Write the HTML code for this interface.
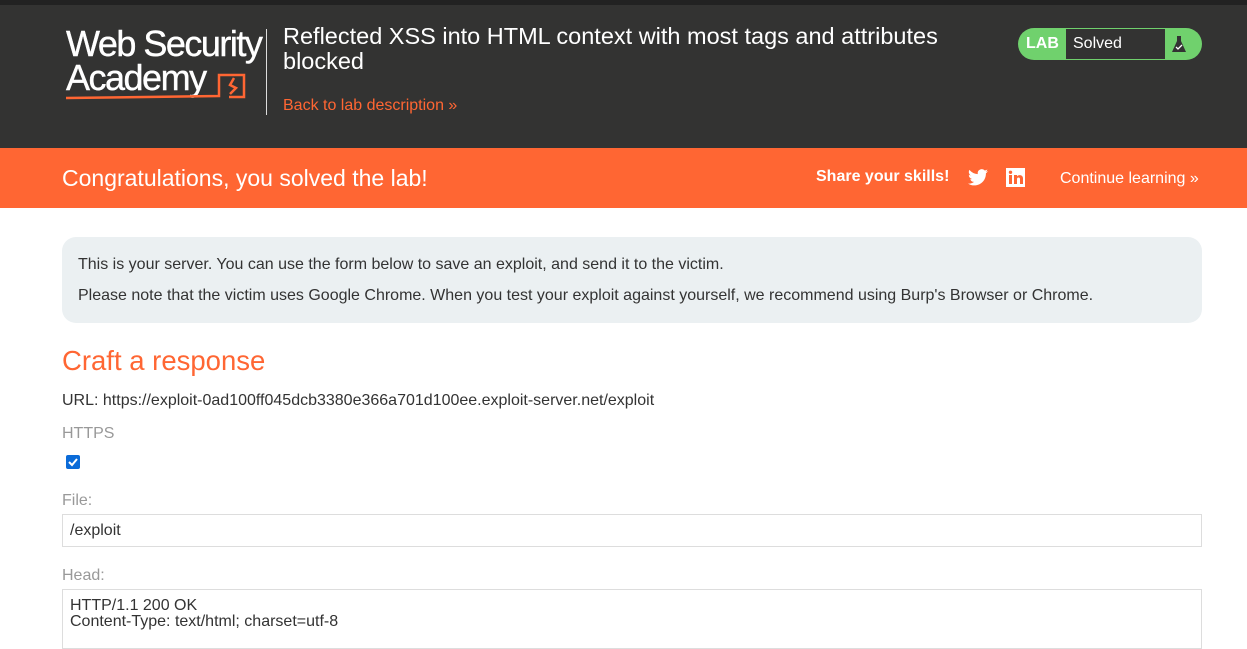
<!DOCTYPE html>
<html><head><meta charset="utf-8"><style>
*{margin:0;padding:0;box-sizing:border-box}
body{width:1247px;height:629px;overflow:hidden;font-family:"Liberation Sans",Arial,sans-serif;background:#fff;color:#333}
.top{height:148px;background:#333332;position:relative;border-top:5px solid #222}
.logo{position:absolute;left:66px;top:22px;color:#fff;font-size:36px;line-height:34px;letter-spacing:-1.5px;-webkit-text-stroke:0.4px #fff}
.vl{position:absolute;left:266px;top:24px;width:1px;height:86px;background:#ddd}
.title{position:absolute;left:283px;top:19px;color:#fff;font-size:23.5px;line-height:25px;width:720px}
.back{position:absolute;left:283px;top:92px;color:#ff6633;font-size:16px}
.badge{position:absolute;left:1018px;top:23px;width:184px;height:32px;background:#70d16d;border-radius:16px}
.badge .l{position:absolute;left:8px;top:7px;color:#fff;font-weight:bold;font-size:16px}
.badge .s{position:absolute;left:48px;top:1px;width:99px;height:30px;background:#333332;color:#fff;font-size:16px;padding:6px 7px}
.band{height:60px;background:#ff6633;position:relative;color:#fff}
.band .c{position:absolute;left:62px;top:17px;font-size:23px}
.band .sh{position:absolute;left:816px;top:20px;font-weight:bold;font-size:16px}
.band .cl{position:absolute;left:1060px;top:22px;font-size:16px}
.info{position:absolute;left:62px;top:237px;width:1140px;height:86px;background:#ebf0f2;border-radius:14px;padding:20px 16px;font-size:16px}
.info p{line-height:16px;margin-bottom:15px}
.h{position:absolute;left:62px;top:345px;color:#ff6633;font-size:27.5px}
.t{position:absolute;left:62px;font-size:16px}
.g{color:#999}
.inp{position:absolute;left:62px;width:1140px;border:1px solid #ddd;font-size:16px;padding:7px 7px;color:#333}
</style></head><body>
<div class="top">
<div class="logo">Web Security<br>Academy</div>
<svg style="position:absolute;left:64px;top:60px" width="185" height="40"><path d="M2 33 L155 31 L155 10 L180 10 L180 32 L165 32" fill="none" stroke="#ff6633" stroke-width="2.5"/><path d="M170 13 L166 20 L172 23 L166 29" fill="none" stroke="#ff6633" stroke-width="2.5"/></svg>
<div class="vl"></div>
<div class="title">Reflected XSS into HTML context with most tags and attributes blocked</div>
<div class="back">Back to lab description &#187;</div>
<div class="badge"><span class="l">LAB</span><div class="s">Solved</div>
<svg style="position:absolute;left:153px;top:7px" width="16" height="18"><path d="M6 1h4v5l5 11H1L6 6z" fill="#333"/><path d="M5 12l2 2 4-4" stroke="#fff" fill="none" stroke-width="1.3"/></svg></div>
</div>
<div class="band"><div class="c">Congratulations, you solved the lab!</div>
<div class="sh">Share your skills!</div>
<svg style="position:absolute;left:968px;top:21px" width="20" height="17" viewBox="0 0 24 20"><path d="M24 2.4a10 10 0 0 1-2.8.8A5 5 0 0 0 23.3.4a10 10 0 0 1-3.1 1.2A4.9 4.9 0 0 0 11.8 6 14 14 0 0 1 1.7.9a4.9 4.9 0 0 0 1.5 6.6A5 5 0 0 1 1 6.9a4.9 4.9 0 0 0 3.9 4.9 5 5 0 0 1-2.2.1 4.9 4.9 0 0 0 4.6 3.4A9.9 9.9 0 0 1 0 17.3 14 14 0 0 0 7.5 19.5c9.1 0 14-7.5 14-14v-.6A10 10 0 0 0 24 2.4z" fill="#fff"/></svg>
<svg style="position:absolute;left:1006px;top:20px" width="19" height="19"><rect width="19" height="19" fill="#fff"/><rect x="3" y="7" width="3" height="9" fill="#ff6633"/><circle cx="4.5" cy="4.3" r="1.7" fill="#ff6633"/><path d="M8 7h3v1.5c1-2 6-2 6 2V16h-3v-5c0-2-3-2-3 0v5H8z" fill="#ff6633"/></svg>
<div class="cl">Continue learning &#187;</div></div>
<div class="info"><p>This is your server. You can use the form below to save an exploit, and send it to the victim.</p><p>Please note that the victim uses Google Chrome. When you test your exploit against yourself, we recommend using Burp's Browser or Chrome.</p></div>
<div class="h">Craft a response</div>
<div class="t" style="top:392px">URL: https://exploit-0ad100ff045dcb3380e366a701d100ee.exploit-server.net/exploit</div>
<div class="t g" style="top:425px">HTTPS</div>
<svg style="position:absolute;left:66px;top:455px" width="14" height="14"><rect width="14" height="14" rx="2" fill="#0b6bd8"/><path d="M3 7l3 3 5-6" stroke="#fff" stroke-width="2" fill="none"/></svg>
<div class="t g" style="top:492px">File:</div>
<div class="inp" style="top:514px;height:33px">/exploit</div>
<div class="t g" style="top:567px">Head:</div>
<div class="inp" style="top:589px;height:60px;line-height:16px;padding-top:8px">HTTP/1.1 200 OK<br>Content-Type: text/html; charset=utf-8</div>
</body></html>
